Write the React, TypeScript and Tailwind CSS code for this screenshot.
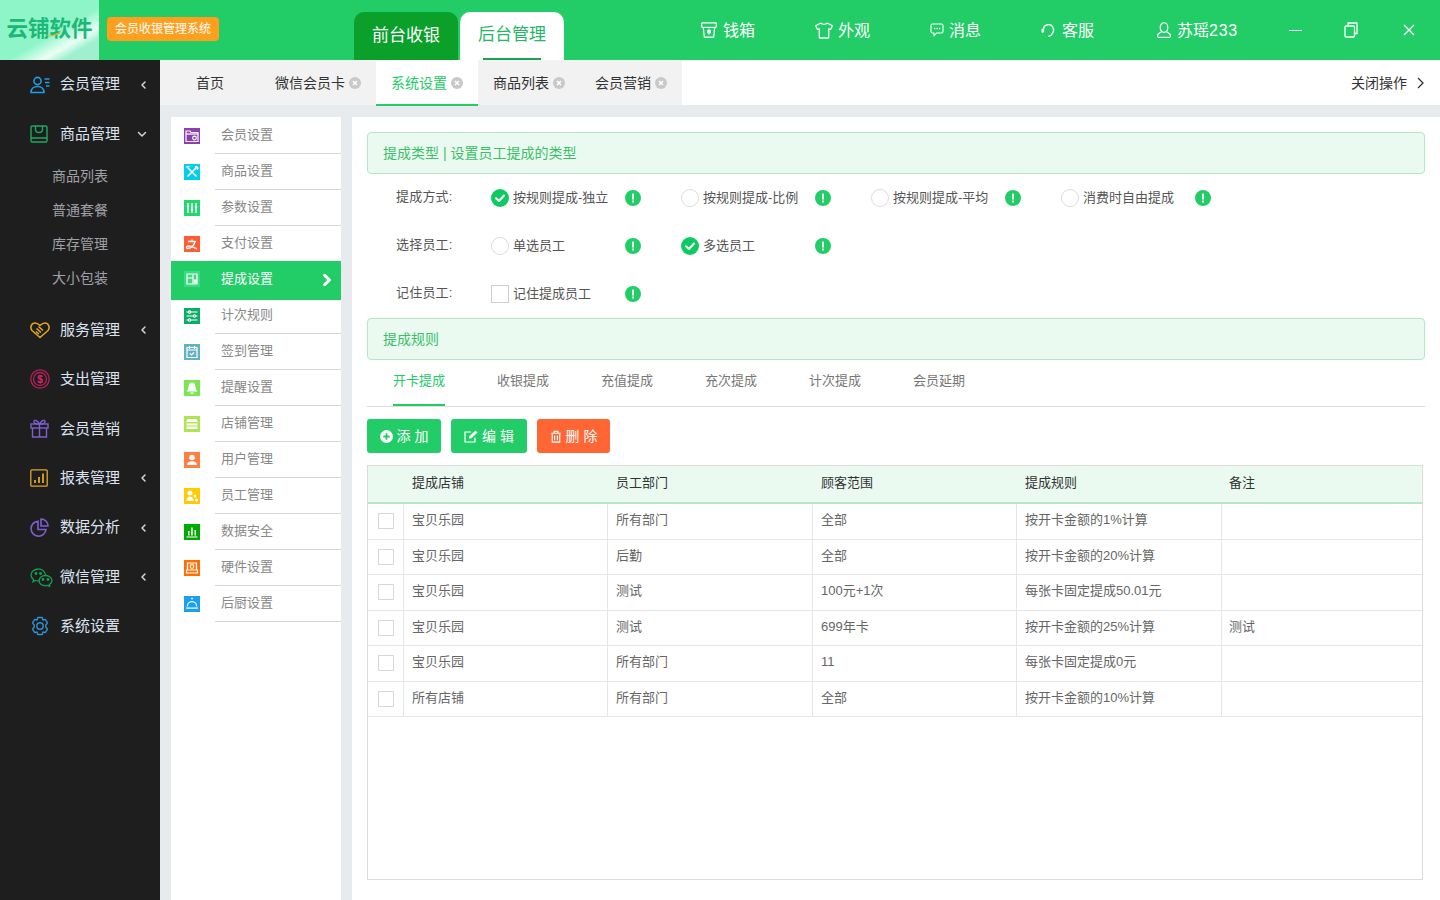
import React from "react";

const FONT = "font-['Liberation_Sans','Noto_Sans_CJK_SC',sans-serif]";

function Chevron({ dir = "left", cls = "" }: { dir?: "left" | "down" | "right"; cls?: string }) {
  const d = dir === "left" ? "M6 2 3 5l3 3" : dir === "down" ? "M1.500 3.500 5 7l3.500-3.500" : "M3 1l4 4-4 4";
  return (
    <svg viewBox="0 0 10 10" className={cls} fill="none" stroke="currentColor" strokeWidth="1.5" strokeLinecap="round" strokeLinejoin="round">
      <path d={d} />
    </svg>
  );
}

const sideIcons: Record<string, React.ReactNode> = {
  member: (
    <svg viewBox="0 0 20 18" className="w-5 h-[18px]" fill="none" stroke="#1a9fe8" strokeWidth="1.6">
      <circle cx="7.5" cy="5" r="3.6" />
      <path d="M1 16.5c0-3.6 2.6-6 6.5-6s6.5 2.4 6.5 6z" />
      <path d="M14.5 3h5M15 6.5h4.5M16 10h3.5" />
    </svg>
  ),
  goods: (
    <svg viewBox="0 0 18 18" className="w-[18px] h-[18px]" fill="none" stroke="#1fa85f" strokeWidth="1.4">
      <rect x="1" y="1" width="16" height="16" rx="1.2" />
      <path d="M1 13h16M5.5 1v3.5c0 2 1.5 3 3.5 3s3.5-1 3.5-3V1" />
    </svg>
  ),
  service: (
    <svg viewBox="0 0 20 18" className="w-5 h-[18px]" fill="none" stroke="#e0a526" strokeWidth="1.6" strokeLinejoin="round">
      <path d="M10 16.5 2 9.500C-.2 7 1 2.500 4.500 2c2.200-.3 3.500.6 5.500 2.500C12 2.600 13.300 1.700 15.500 2 19 2.500 20.200 7 18 9.500z" />
      <path d="M6.500 7.500 11 11.500M8.500 5.500l4.500 4M6 10.500l3 2.500" />
    </svg>
  ),
  spend: (
    <svg viewBox="0 0 20 20" className="w-5 h-5" fill="none" stroke="#b51f57" strokeWidth="1.3">
      <circle cx="10" cy="10" r="9.2" />
      <circle cx="10" cy="10" r="6.5" />
      <text x="10" y="13.5" textAnchor="middle" fontSize="10" fontWeight="700" fill="#e02a68" stroke="none" fontFamily="Liberation Sans">$</text>
    </svg>
  ),
  gift: (
    <svg viewBox="0 0 19 19" className="w-[19px] h-[19px]" fill="none" stroke="#7d5fd0" strokeWidth="1.4">
      <rect x="1" y="5" width="17" height="4" />
      <path d="M2.500 9v9h14V9M9.500 5v13M9.500 5C7 1 4.500.5 4 2.500 3.600 4 5.500 5 9.500 5zM9.500 5c2.500-4 5-4.500 5.500-2.500.4 1.500-1.500 2.500-5.500 2.500z" />
    </svg>
  ),
  report: (
    <svg viewBox="0 0 18 18" className="w-[18px] h-[18px]" fill="none" stroke="#e0a526" strokeWidth="1.3">
      <rect x=".8" y=".8" width="16.4" height="16.4" rx="1" />
      <path strokeWidth="1.8" d="M5 14v-3M9 14V8M13 14V4.500" />
    </svg>
  ),
  pie: (
    <svg viewBox="0 0 19 19" className="w-[19px] h-[19px]" fill="none" stroke="#7d5fd0" strokeWidth="1.6">
      <path d="M8 3.200a7.500 7.500 0 1 0 8 8.300H8z" />
      <path d="M11 1a7 7 0 0 1 7 7h-7z" />
    </svg>
  ),
  wechat: (
    <svg viewBox="0 0 23 19" className="w-[23px] h-[19px]" fill="none" stroke="#12a150" strokeWidth="1.3">
      <path d="M8.500 1C4.400 1 1 3.700 1 7c0 1.800 1 3.400 2.600 4.500L3 13.800l2.600-1.300c.9.300 1.900.4 2.900.4h.8" />
      <path d="M15.800 7.500c-.8-3.800-3.800-6.500-7.300-6.500" />
      <path d="M15.500 7.500c-3.600 0-6.500 2.300-6.500 5.200s2.900 5.100 6.500 5.100c.8 0 1.500-.1 2.200-.3l2 1-.4-1.900c1.600-1 2.700-2.300 2.700-3.900 0-2.900-2.900-5.200-6.500-5.200z" />
      <circle cx="6" cy="5.500" r=".8" fill="#12a150" />
      <circle cx="10.500" cy="5.500" r=".8" fill="#12a150" />
      <circle cx="13" cy="11.500" r=".8" fill="#12a150" />
      <circle cx="18" cy="11.500" r=".8" fill="#12a150" />
    </svg>
  ),
  gear: (
    <svg viewBox="0 0 20 20" className="w-5 h-5" fill="none" stroke="#2f8fd0" strokeWidth="1.4" strokeLinejoin="round">
      <path d="M7.800 1.500h4.400l.8 2.500 2.300-.6 2.200 3.500-1.700 2.100v2l1.700 2.100-2.200 3.500-2.300-.6-.8 2.500H7.800L7 16l-2.300.6-2.200-3.500L4.200 11V9L2.500 6.900l2.200-3.500L7 4z" />
      <circle cx="10" cy="10" r="3.200" />
    </svg>
  ),
};

type Side = { label: string; icon: string; chevron?: "left" | "down" };
const sideTop: Side[] = [
  { label: "会员管理", icon: "member", chevron: "left" },
  { label: "商品管理", icon: "goods", chevron: "down" },
];
const sideBottom: Side[] = [
  { label: "服务管理", icon: "service", chevron: "left" },
  { label: "支出管理", icon: "spend" },
  { label: "会员营销", icon: "gift" },
  { label: "报表管理", icon: "report", chevron: "left" },
  { label: "数据分析", icon: "pie", chevron: "left" },
  { label: "微信管理", icon: "wechat", chevron: "left" },
  { label: "系统设置", icon: "gear" },
];

function SideRow({ item }: { item: Side }) {
  return (
    <div className="h-[49.4px] flex items-center text-[15px] text-[#dbe3f0]">
      <div className="w-[60px] pl-[30px] flex items-center shrink-0">{sideIcons[item.icon]}</div>
      <span className="w-[79px] shrink-0">{item.label}</span>
      {item.chevron && (
        <Chevron dir={item.chevron} cls={`w-[10px] h-[10px] text-[#cfd6e0] ${item.chevron === "down" ? "-ml-[2px] -mt-px" : ""}`} />
      )}
    </div>
  );
}

const g = { fill: "none", stroke: "#fff", strokeWidth: 1.2 };
const subMenu: { label: string; bg: string; glyph: React.ReactNode; active?: boolean }[] = [
  { label: "会员设置", bg: "bg-[#8e3fae]", glyph: <g {...g}><path d="M2 13.500V3h4l1 1.500h7v9z" /><path d="M2 6h12" /><circle cx="10.500" cy="10" r="1.800" /></g> },
  { label: "商品设置", bg: "bg-[#00cdf0]", glyph: <g {...g} strokeWidth="1.6"><path d="M4 4l8.500 8.500M12.500 3.500 3.500 12.500" /><path d="M2.500 3.500C3 2.500 4.500 2 5.500 3M11 3.500 12.500 2.500 14 4l-1 1.500" /></g> },
  { label: "参数设置", bg: "bg-[#22d670]", glyph: <g {...g} strokeWidth="1.5"><path d="M4 3v10M8 3v10M12 3v10" /><path d="M2.800 6h2.400M6.800 10h2.400M10.800 7h2.400" /></g> },
  { label: "支付设置", bg: "bg-[#ff5c33]", glyph: <g {...g} strokeWidth="1.4"><path d="M4 5.500h8M8 3.500v2M11 5.500C10 10 6.500 12.500 3.500 12.500c-1.500 0-1.500-2.500 1-2.500 2 0 5 1 8.500 3" /></g> },
  { label: "提成设置", bg: "bg-[#3fd781]", active: true, glyph: <g {...g}><path d="M3 3h10v10H3z" /><path d="M3 7h6M9 3v10" /><path d="M10.500 9h2v2l-1 1-1-1z" fill="#fff" /></g> },
  { label: "计次规则", bg: "bg-[#0bad66]", glyph: <g {...g}><path d="M2.500 4h11M2.500 8h11M2.500 12h11" /><circle cx="5.500" cy="4" r="1.200" fill="#0bad66" /><circle cx="10.500" cy="8" r="1.200" fill="#0bad66" /><circle cx="5.500" cy="12" r="1.200" fill="#0bad66" /></g> },
  { label: "签到管理", bg: "bg-[#62b3c2]", glyph: <g {...g}><path d="M3 3.500h10v10H3zM5.500 2v3M10.500 2v3M3 6h10" /><path d="M6 9.500l1.500 1.500L10 8.500" /></g> },
  { label: "提醒设置", bg: "bg-[#78e655]", glyph: <g fill="#fff"><path d="M8 2.500c2.500 0 3.500 2 3.500 4.500 0 2 1 3.500 2 4.500h-11c1-1 2-2.500 2-4.500 0-2.500 1-4.500 3.500-4.500z" /><rect x="6.500" y="12.300" width="3" height="1.500" /></g> },
  { label: "店铺管理", bg: "bg-[#aee653]", glyph: <g fill="#fff"><path d="M3.500 3h9l1.500 3H2z" /><rect x="2.500" y="7.500" width="11" height="5.500" /><rect x="2" y="9.500" width="12" height="1" fill="#aee653" /></g> },
  { label: "用户管理", bg: "bg-[#ff7f40]", glyph: <g fill="#fff"><circle cx="8" cy="5.500" r="2.800" /><path d="M3 13c0-2.500 2-3.800 5-3.800s5 1.300 5 3.800z" /></g> },
  { label: "员工管理", bg: "bg-[#ffcb00]", glyph: <g fill="#fff"><circle cx="6" cy="5" r="2.500" /><path d="M2.500 13c0-3 1.500-4.500 3.500-4.500S9.500 10 9.500 13z" /><circle cx="11" cy="8" r="1.500" /><circle cx="12.500" cy="12" r="1.500" /></g> },
  { label: "数据安全", bg: "bg-[#00aa00]", glyph: <g fill="#fff"><rect x="4" y="7" width="1.500" height="4.500" /><rect x="7.200" y="3.500" width="1.500" height="8" /><rect x="10.500" y="6" width="1.500" height="5.500" /><rect x="2.500" y="12.500" width="11" height="1" /></g> },
  { label: "硬件设置", bg: "bg-[#ff6f00]", glyph: <g {...g}><path d="M3.500 3h9v7h-9zM2.500 10h11v3h-11z" /><circle cx="8" cy="6.500" r="1.800" /></g> },
  { label: "后厨设置", bg: "bg-[#1aa0ee]", glyph: <g fill="#fff"><rect x="7.200" y="1.800" width="1.600" height="1.500" /><path d="M2.800 10.500a5.200 5.500 0 0 1 10.400 0h-1.200a4 4.200 0 0 0-8 0z" /><rect x="2" y="11.500" width="12" height="1.200" /></g> },
];

function TabClose() {
  return (
    <svg viewBox="0 0 12 12" className="w-3 h-3 shrink-0">
      <circle cx="6" cy="6" r="6" fill="#c9c9c9" />
      <path d="M4 4l4 4M8 4 4 8" stroke="#fff" strokeWidth="1.5" />
    </svg>
  );
}

function Info() {
  return (
    <svg viewBox="0 0 16 16" className="w-4 h-4 shrink-0">
      <circle cx="8" cy="8" r="8" fill="#22cc66" />
      <rect x="7" y="3.500" width="2" height="6" rx=".6" fill="#fff" />
      <rect x="7" y="10.500" width="2" height="2" rx=".4" fill="#fff" />
    </svg>
  );
}

function Radio({ checked }: { checked?: boolean }) {
  return checked ? (
    <svg viewBox="0 0 18 18" className="w-[18px] h-[18px] shrink-0">
      <circle cx="9" cy="9" r="9" fill="#0dca63" />
      <path d="M5 9.200 8 12l5-5.500" fill="none" stroke="#fff" strokeWidth="2" strokeLinecap="round" strokeLinejoin="round" />
    </svg>
  ) : (
    <span className="w-[18px] h-[18px] shrink-0 rounded-full border border-[#dcdcdc] bg-white" />
  );
}

function Opt({ label, checked, square }: { label: string; checked?: boolean; square?: boolean }) {
  return (
    <div className="w-[190px] shrink-0 flex items-center">
      {square ? <span className="w-[18px] h-[18px] shrink-0 border border-[#cfcfcf] bg-white" /> : <Radio checked={checked} />}
      <span className="ml-1 w-[112px] shrink-0 text-[13px] text-[#555]">{label}</span>
      <Info />
    </div>
  );
}

function FormRow({ label, children }: { label: string; children: React.ReactNode }) {
  return (
    <div className="h-12 flex items-center pl-[29px]">
      <span className="w-[95px] shrink-0 text-[13px] text-[#555] -mt-0.5 tracking-[0.2px]">{label}</span>
      {children}
    </div>
  );
}

const rows = [
  ["宝贝乐园", "所有部门", "全部", "按开卡金额的1%计算", ""],
  ["宝贝乐园", "后勤", "全部", "按开卡金额的20%计算", ""],
  ["宝贝乐园", "测试", "100元+1次", "每张卡固定提成50.01元", ""],
  ["宝贝乐园", "测试", "699年卡", "按开卡金额的25%计算", "测试"],
  ["宝贝乐园", "所有部门", "11", "每张卡固定提成0元", ""],
  ["所有店铺", "所有部门", "全部", "按开卡金额的10%计算", ""],
];
const colCls = ["w-[204px] pl-2", "w-[205px] pl-2", "w-[204px] pl-2", "w-[205px] pl-2", "flex-1 pl-[7px]"];

export default function App() {
  return (
    <div className={`${FONT} w-[1440px] h-[900px] overflow-hidden flex flex-col bg-[#e8ebee]`}>
      {/* top bar */}
      <header className="h-[60px] shrink-0 bg-[#22cc66] flex text-white">
        <div className="w-[99px] shrink-0 relative flex items-center justify-center bg-[linear-gradient(150deg,#8ef5c9_0%,#8ef5c9_55%,#eafff5_72%,#9ff0cf_82%,#a2efd0_100%)]">
          <span className="text-[21.5px] font-bold text-[#1cb877] whitespace-nowrap -mt-0.5">云铺软件</span>
          <svg viewBox="0 0 20 8" className="absolute left-[43px] top-[29px] w-5 h-2">
            <path d="M1 6c6 1.500 12 0 18-5-4 6-11 8-18 5z" fill="#f5b21f" />
          </svg>
        </div>
        <div className="ml-2 mt-[17px] w-[112px] h-6 rounded bg-[#ff9f1f] flex items-center justify-center text-xs whitespace-nowrap">会员收银管理系统</div>
        <div className="ml-[135px] mt-3 w-[104px] h-12 rounded-t-[10px] bg-[#0aa02a] flex items-center justify-center text-[17px]">前台收银</div>
        <div className="ml-0.5 mt-3 w-[104px] h-12 rounded-t-[10px] bg-white flex flex-col items-center text-[17px] text-[#22b866]">
          <span className="flex-1 flex items-center">后台管理</span>
          <span className="w-[58px] h-0.5 bg-[#18a455]" />
        </div>
        <div className="ml-[137px] flex items-center text-base">
          <svg viewBox="0 0 16 16" className="w-4 h-4 mr-[6px]" fill="none" stroke="#fff" strokeWidth="1.2" strokeLinejoin="round">
            <path d="M1.500.8h13c.5 0 .8.300.8.800v3c0 .5-.3.800-.8.800h-.8l-1 9.800H3.300l-1-9.800h-.8c-.5 0-.8-.3-.8-.8v-3c0-.5.300-.8.800-.8z" />
            <path d="M2.500 5.400h11" />
            <path d="M8 6.500v6M6.500 8.500h3V11h-3z" fill="#fff" strokeWidth="1" />
          </svg>
          <span className="pt-px">钱箱</span>
          <svg viewBox="0 0 18 17" className="ml-[60px] w-[18px] h-[17px] mr-[5px]" fill="none" stroke="#fff" strokeWidth="1.3" strokeLinejoin="round">
            <path d="M6 1c1 1.800 5 1.800 6 0l5 2.500c.3.200.4.500.2.800L15.500 7.500 13.700 6.800V15.500c0 .3-.2.500-.5.500H4.800c-.3 0-.5-.2-.5-.5V6.800l-1.800.7L.8 4.300c-.2-.3-.1-.6.200-.8z" />
          </svg>
          <span className="pt-px">外观</span>
          <svg viewBox="0 0 14 14" className="ml-[60px] w-[14px] h-[14px] mr-[5px]" fill="none" stroke="#fff" strokeWidth="1.1" strokeLinejoin="round">
            <path d="M2.500 1h9c.8 0 1.500.7 1.500 1.500v6c0 .8-.7 1.500-1.500 1.500H6.500L4 13v-3H2.500C1.700 10 1 9.300 1 8.500v-6C1 1.700 1.700 1 2.500 1z" />
            <path d="M4 5.500h1.200M6.500 5.500h1.200M9 5.500h1.200" strokeWidth="1.3" />
          </svg>
          <span className="pt-px">消息</span>
          <svg viewBox="0 0 15 15" className="ml-[60px] w-[15px] h-[15px] mr-1.5" fill="none" stroke="#fff" strokeWidth="1.4" strokeLinecap="round">
            <path d="M2.500 8.500V6.500A5 5 0 0 1 12 4.500c.8 1.500.8 3.500 0 5" />
            <path d="M1.500 6.500v2.500" strokeWidth="1.8" />
            <path d="M11.800 9.800c-.8 1.800-2 3-4 3.500" />
          </svg>
          <span className="pt-px">客服</span>
          <svg viewBox="0 0 14 16" className="ml-[63px] w-[14px] h-4 mr-1.5" fill="none" stroke="#fff" strokeWidth="1.2" strokeLinejoin="round">
            <ellipse cx="7" cy="5.500" rx="3.800" ry="4.800" />
            <path d="M4.800 9.500 1.200 12c-.3.200-.5.500-.5.900v1.700c0 .4.300.7.700.7h11.200c.4 0 .7-.3.700-.7v-1.700c0-.4-.2-.7-.5-.9L9.200 9.500" />
          </svg>
          <span className="pt-px">苏瑶<span className="tracking-[0.7px]">233</span></span>
          <span className="ml-[51px] w-[13px] h-px bg-white" />
          <svg viewBox="0 0 14 16" className="ml-[42px] w-[14px] h-4" fill="none" stroke="#fff" strokeWidth="1.3">
            <rect x="1" y="4" width="9.500" height="11" rx="1" /><path d="M4 3.500V1h9v10.500h-2.500" />
          </svg>
          <svg viewBox="0 0 12 12" className="ml-[45px] w-3 h-3" fill="none" stroke="#fff" strokeWidth="1.3">
            <path d="M1 1l10 10M11 1 1 11" />
          </svg>
        </div>
      </header>

      <div className="flex-1 flex min-h-0">
        {/* sidebar */}
        <aside className="w-40 shrink-0 bg-[#1e1e1e]">
          {sideTop.map((s) => <SideRow key={s.label} item={s} />)}
          <div className="pb-[10.6px] pl-[52px] text-sm text-[#a0a0a8]">
            {["商品列表", "普通套餐", "库存管理", "大小包装"].map((t) => (
              <div key={t} className="h-[34px] flex items-center">{t}</div>
            ))}
          </div>
          {sideBottom.map((s) => <SideRow key={s.label} item={s} />)}
        </aside>

        <div className="flex-1 flex flex-col min-w-0">
          {/* tabs bar */}
          <div className="h-[45px] shrink-0 bg-white flex text-sm text-[#333]">
            <div className="w-[100px] bg-[#f2f2f2] flex items-center justify-center">首页</div>
            {[
              { t: "微信会员卡" },
              { t: "系统设置", active: true },
              { t: "商品列表" },
              { t: "会员营销" },
            ].map((x) => (
              <div
                key={x.t}
                className={`px-[15px] flex items-center gap-1 ${x.active ? "relative z-10 h-[46px] pt-px bg-white text-[#22cc66] border-b-2 border-[#22cc66]" : "h-[45px] bg-[#f2f2f2]"}`}
              >
                <span>{x.t}</span>
                <TabClose />
              </div>
            ))}
            <div className="ml-auto pr-4 flex items-center">
              <span>关闭操作</span>
              <svg viewBox="0 0 7 12" className="ml-2.5 w-[7px] h-3" fill="none" stroke="#333" strokeWidth="1.3">
                <path d="M1 1l5 5-5 5" />
              </svg>
            </div>
          </div>

          <div className="flex-1 flex min-h-0 pt-3 pl-[11px]">
            {/* sub menu */}
            <nav className="w-[170px] shrink-0 bg-white pt-px">
              {subMenu.map((m) =>
                m.active ? (
                  <div key={m.label} className="h-[39px] -mt-px -mb-[2px] relative bg-[#22cc66] flex items-center pl-[13px] text-[13px] text-white">
                    <svg viewBox="0 0 16 16" className="w-4 h-4 shrink-0 -mt-[3px]">
                      <rect width="16" height="16" fill="#3fd781" />
                      {m.glyph}
                    </svg>
                    <span className="ml-[21px] -mt-[3px]">{m.label}</span>
                    <Chevron dir="right" cls="ml-auto mr-2 w-3 h-3 -mt-px [&_path]:stroke-[2.5]" />
                  </div>
                ) : (
                  <div key={m.label} className="h-9 flex items-center pl-[13px] text-[13px] text-[#888]">
                    <svg viewBox="0 0 16 16" className={`w-4 h-4 shrink-0 ${m.bg}`}>{m.glyph}</svg>
                    <div className="ml-[15px] pl-1.5 pb-[2px] flex-1 h-9 flex items-center border-b border-[#d8d8d8]">{m.label}</div>
                  </div>
                ),
              )}
            </nav>

            {/* main */}
            <main className="ml-[11px] flex-1 bg-white pt-[15px] pl-[15px] pr-[15px] min-w-0">
              <div className="h-[42px] rounded-sm border border-[#b5e6c8] bg-[#eafaf1] pl-[15px] flex items-center text-sm text-[#3cc067]">
                提成类型 | 设置员工提成的类型
              </div>
              <FormRow label="提成方式:">
                <Opt label="按规则提成-独立" checked />
                <Opt label="按规则提成-比例" />
                <Opt label="按规则提成-平均" />
                <Opt label="消费时自由提成" />
              </FormRow>
              <FormRow label="选择员工:">
                <Opt label="单选员工" />
                <Opt label="多选员工" checked />
              </FormRow>
              <FormRow label="记住员工:">
                <Opt label="记住提成员工" square />
              </FormRow>
              <div className="h-[42px] rounded-sm border border-[#b5e6c8] bg-[#eafaf1] pl-[15px] flex items-center text-sm text-[#3cc067]">
                提成规则
              </div>
              <div className="h-[47px] border-b border-[#dedede] pl-[26px] flex text-[13px] text-[#777]">
                {["开卡提成", "收银提成", "充值提成", "充次提成", "计次提成", "会员延期"].map((t, i) => (
                  <div key={t} className={`w-[52px] mr-[52px] h-[46px] flex items-center justify-center whitespace-nowrap ${i === 0 ? "pb-[3px] text-[#22cc66] border-b-2 border-[#22cc66]" : "pb-[5px]"}`}>
                    {t}
                  </div>
                ))}
              </div>
              <div className="mt-3 flex gap-2.5 text-sm text-white">
                <button className="w-[74px] h-[34px] rounded-[3px] bg-[#22cc66] flex items-center justify-center gap-1">
                  <svg viewBox="0 0 14 14" className="w-[13px] h-[13px]">
                    <circle cx="7" cy="7" r="7" fill="#fff" />
                    <path d="M7 3.500v7M3.500 7h7" stroke="#22cc66" strokeWidth="2" />
                  </svg>
                  添 加
                </button>
                <button className="w-[76px] h-[34px] rounded-[3px] bg-[#22cc66] flex items-center justify-center gap-1">
                  <svg viewBox="0 0 14 14" className="w-[14px] h-[14px]" fill="none" stroke="#fff" strokeWidth="1.2">
                    <path d="M11 8.500V13H1V3h6" /><path d="M5 9.500V7.500l6.500-6 2 2-6.500 6z" fill="#fff" stroke="none" />
                  </svg>
                  编 辑
                </button>
                <button className="w-[73px] h-[34px] rounded-[3px] bg-[#ff6633] flex items-center justify-center gap-1">
                  <svg viewBox="0 0 12 14" className="w-3 h-[13px]" fill="none" stroke="#fff" strokeWidth="1.3">
                    <path d="M1 3.500h10M4 3.500V1.500h4v2M2 3.500V13h8V3.500M4.500 6v5M7.500 6v5" />
                  </svg>
                  删 除
                </button>
              </div>
              <div className="mt-3 w-[1056px] h-[415px] border border-[#dcdcdc]">
                <div className="h-[38px] pb-0.5 bg-[#eafaf1] border-b-2 border-[#b5e6c8] flex items-center text-[13px] text-[#333]">
                  <div className="w-[36px] shrink-0" />
                  {["提成店铺", "员工部门", "顾客范围", "提成规则", "备注"].map((t, i) => (
                    <div key={t} className={`${colCls[i]} shrink-0`}>{t}</div>
                  ))}
                </div>
                {rows.map((r, ri) => (
                  <div key={ri} className="h-[35.5px] border-b border-[#e6e6e6] flex text-[13px] text-[#666]">
                    <div className="w-[36px] shrink-0 flex items-center justify-center pl-px border-r border-[#e6e6e6]">
                      <span className="w-4 h-4 border border-[#d8d8d8] bg-white" />
                    </div>
                    {r.map((c, i) => (
                      <div key={i} className={`${colCls[i]} shrink-0 pb-[3px] flex items-center ${i < 4 ? "border-r border-[#e6e6e6]" : ""}`}>{c}</div>
                    ))}
                  </div>
                ))}
              </div>
            </main>
          </div>
        </div>
      </div>
    </div>
  );
}
